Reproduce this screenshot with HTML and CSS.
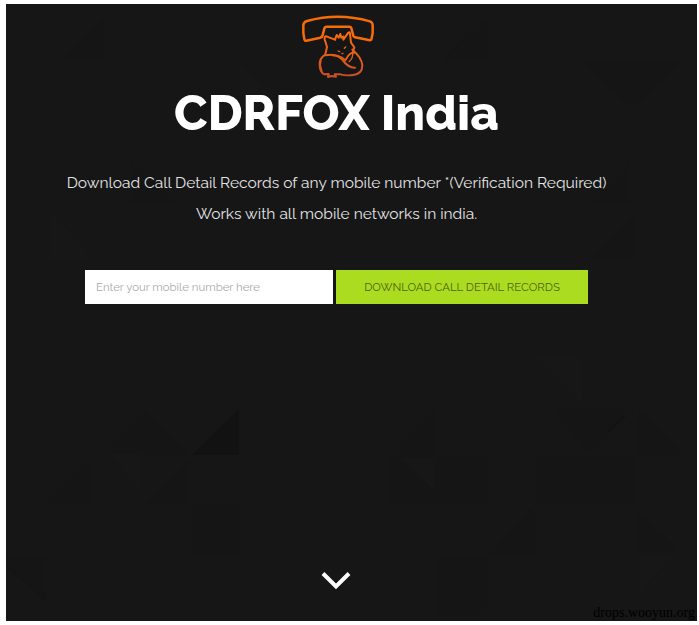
FILE: index.html
```html
<!DOCTYPE html>
<html lang="en">
<head>
<meta charset="utf-8">
<title>CDRFOX India</title>
<link rel="stylesheet" href="styles.css">
</head>
<body>
<main class="hero">
  <svg class="facets" viewBox="6 4 691 617" aria-hidden="true">
    <path d="M192 455L239 409V455Z" fill="#121212"/>
    <g fill="#151515">
      <path d="M100 455L145 410L190 455ZM45 504L90 458V504ZM145 504L190 458V504Z"/>
      <path d="M6 565L46 600V556H6ZM192 504H239V555H192Z"/>
      <path d="M390 455L435 410V455ZM390 456H487V504H390ZM536 456H636V504H536Z"/>
      <path d="M553 409H635L588 455ZM638 409V455H685Z"/>
      <path d="M490 555L535 504V555ZM638 510V553H682ZM436 556H487V615H436Z"/>
      <path d="M440 62L487 16V62ZM585 62L632 108L680 62ZM585 205L630 160V205Z"/>
      <path d="M60 62L105 16V62ZM130 160L176 205H130ZM590 260L635 215V260Z"/>
    </g>
    <g fill="#171717">
      <path d="M240 62L286 108H240ZM50 210L95 260H50ZM536 358L582 404V358Z"/>
      <path d="M400 458H433V490ZM110 455H140V490ZM640 556H675L640 590Z"/>
    </g>
    <path d="M7 567L46 600" stroke="#131313"/>
    <path d="M608 431L624 416" stroke="#131313" stroke-width="2"/>
  </svg>

  <header class="intro">
    <svg class="logo" viewBox="0 0 285 240" fill="none" stroke-linecap="round" stroke-linejoin="round" aria-label="CDRFOX">
      <defs>
        <linearGradient id="ember" gradientUnits="userSpaceOnUse" x1="0" y1="80" x2="0" y2="220">
          <stop offset="0" stop-color="#ff6d0a"/>
          <stop offset="1" stop-color="#c94e26"/>
        </linearGradient>
      </defs>
      <path stroke="#f56c08" stroke-width="7.5" d="M40 60Q41 51 51 48Q145 22 240 49Q248 52 248 61V84L244 104Q242 107 236 105L195 97Q190 96 189 89L184 69Q183 65 177 65H110Q104 65 103 71L98 90Q97 96 91 98L49 107Q44 108 43 102L40 84Z"/>
      <g stroke="url(#ember)" stroke-width="6">
        <path d="M135 104L109 94Q102 94 104 103L111 126L106 148"/>
        <path d="M135 104L140 90L146 98L151 87L154 98L160 95L160 104L175 83Q180 79 180 87L183 113L193 127L189 139L193 143Q179 142 171 158L166 166L156 158Q141 151 127 151"/>
        <path d="M106 149Q88 160 89 180Q89 201 103 208L116 207L114 216L124 213L138 215L134 208H151Q167 213 190 210Q217 207 217 181Q215 157 187 134"/>
        <path d="M107 151Q142 144 160 168Q177 189 195 188"/>
        <path d="M188 143Q190 160 177 170M93 168L91 180L96 200" stroke-width="4"/>
      </g>
      <path stroke="#e66024" stroke-width="4" d="M144 138L149 140M163 130L167 126M156 146L159 145"/>
    </svg>
    <h1 class="title">CDRFOX India</h1>
    <p class="line line-main">Download Call Detail Records of any mobile number *(Verification Required)</p>
    <p class="line line-sub">Works with all mobile networks in india.</p>
  </header>

  <form class="lookup">
    <input class="number" type="text" placeholder="Enter your mobile number here" aria-label="Mobile number">
    <button class="download" type="button">DOWNLOAD CALL DETAIL RECORDS</button>
  </form>

  <svg class="chevron" viewBox="0 0 32 20" fill="none" aria-hidden="true">
    <path d="M3 3.5L16 16.5L29 3.5" stroke="#fff" stroke-width="4"/>
  </svg>
  <span class="credit">drops.wooyun.org</span>
</main>
</body>
</html>
```
FILE: styles.css
```css
* {
  box-sizing: border-box;
}

body {
  margin: 0;
  padding: 4px 2px 4px 6px;
  background: #fff;
  font-family: Raleway, Lato, "Open Sans", sans-serif;
}

.hero {
  position: relative;
  display: flex;
  flex-direction: column;
  align-items: center;
  height: 617px;
  padding: 1px 30px 31px 0;
  overflow: hidden;
  background: #161616;
  color: #fff;
}

.facets {
  position: absolute;
  inset: 0;
  width: 100%;
  height: 100%;
}

.intro,
.lookup,
.chevron {
  position: relative;
}

.intro {
  display: flex;
  flex-direction: column;
  align-items: center;
  text-align: center;
  white-space: nowrap;
}

.logo {
  display: block;
  width: 95px;
  height: 80px;
  margin-left: 2px;
}

.title {
  margin: 1px 0 0;
  font-size: 48.8px;
  font-weight: 800;
  line-height: 54px;
}

.line {
  margin: 0;
  color: #e4e4e4;
  font-size: 15.55px;
  font-weight: 400;
  line-height: 31px;
}

.line-main {
  margin-top: 27px;
}

.lookup {
  display: flex;
  gap: 3px;
  margin-top: 41px;
}

.number,
.download {
  height: 34px;
  border: 0;
  border-radius: 0;
  font-family: inherit;
  font-size: 11.4px;
}

.number {
  width: 248px;
  padding: 0 11px;
  background: #fff;
}

.number::placeholder {
  color: #aaa;
  opacity: 1;
}

.download {
  width: 252px;
  padding: 0;
  background: #acdc20;
  color: #4c6512;
}

.chevron {
  width: 32px;
  height: 20px;
  margin-top: auto;
  margin-right: 2px;
}

.credit {
  position: absolute;
  right: 2px;
  bottom: 0;
  color: #000;
  font: 14px/16px "Liberation Serif", serif;
}
```
